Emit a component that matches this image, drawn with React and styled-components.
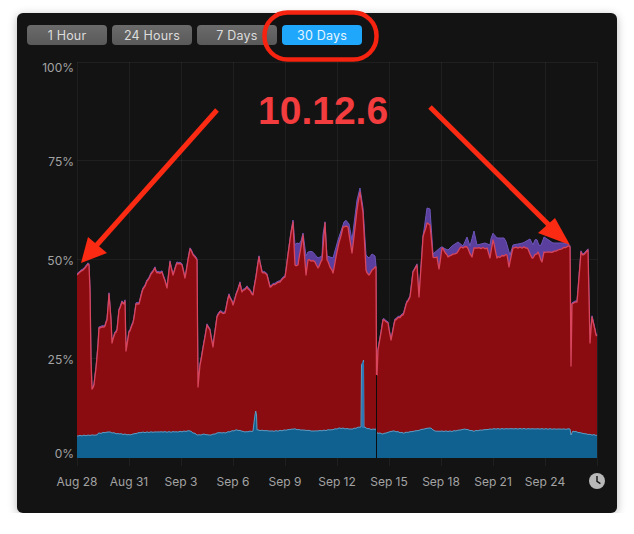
import React from 'react'
import styled, { createGlobalStyle } from 'styled-components'

const RANGES = ['1 Hour', '24 Hours', '7 Days', '30 Days']
const Y_TICKS = [['100%', 0], ['75%', 80], ['50%', 85], ['25%', 85], ['0%', 80]]
const X_TICKS = ['Aug 28', 'Aug 31', 'Sep 3', 'Sep 6', 'Sep 9', 'Sep 12', 'Sep 15', 'Sep 18', 'Sep 21', 'Sep 24']
const GRID_X = [77, 129, 181, 233, 285, 337, 389, 441, 493, 545, 597]
const GRID_Y = [62, 160, 259, 358]
const BASE = 458

// all points are in page pixels, read off the screenshot
const SYSTEM = [
  [77, 275], [80, 272], [84, 269], [88, 264], [89, 265], [90, 290], [91, 360], [92, 389], [94, 385], [96, 368], [98, 345], [99, 328],
  [103, 327], [105, 326], [107, 320], [109, 294], [111, 320], [112, 343], [115, 333], [117, 330], [119, 310], [121, 305], [122, 302],
  [124, 304], [125, 301], [126, 351], [129, 332], [133, 323], [136, 304], [139, 304], [142, 292], [148, 280], [155, 268], [157, 273],
  [162, 272], [167, 288], [170, 262], [173, 275], [177, 263], [182, 265], [185, 278], [190, 249], [195, 257], [197, 260], [198, 387],
  [200, 365], [207, 325], [210, 330], [213, 347], [217, 317], [220, 312], [225, 313], [229, 295], [233, 305], [240, 283], [242, 292],
  [247, 287], [253, 295], [259, 257], [262, 272], [267, 275], [270, 287], [280, 282], [285, 277], [290, 240], [293, 222], [295, 265],
  [298, 265], [303, 235], [306, 275], [308, 260], [315, 262], [318, 268], [322, 260], [325, 223], [327, 260], [333, 273], [338, 247],
  [343, 227], [348, 227], [352, 253], [357, 210], [360, 192], [363, 213], [366, 270], [369, 275], [375, 267], [376, 267], [376.5, 375], [377, 375],
  [378, 350], [383, 320], [388, 323], [391, 340], [395, 320], [403, 315], [407, 302], [410, 297], [413, 272], [417, 265], [419, 297],
  [423, 237], [427, 223], [430, 225], [433, 257], [437, 257], [439, 269], [442, 248], [448, 257], [457, 253], [460, 248], [467, 247],
  [472, 257], [474, 248], [487, 248], [490, 258], [493, 240], [497, 258], [507, 255], [509, 267], [513, 248], [527, 248], [532, 258],
  [538, 252], [542, 262], [544, 252], [553, 252], [568, 246], [570, 247], [571, 366], [572, 304], [577, 302], [581, 252], [583, 255],
  [588, 250], [590, 343], [592, 317], [596, 335], [597, 336],
]

// the purple only shows where it clears the red, 458 means no bump
const USER_BUMPS = [
  [77, 458], [284, 458], [291, 236], [293, 220], [295, 245], [297, 242], [300, 245], [303, 233], [306, 256], [308, 252], [312, 251],
  [318, 258], [322, 256], [324, 213], [327, 256], [333, 258], [338, 240], [345, 219], [349, 224], [352, 240], [357, 200], [360, 188],
  [363, 208], [366, 255], [369, 258], [372, 254], [375, 256], [376, 458], [421, 458], [424, 230], [427, 208], [430, 209], [433, 254],
  [441, 247], [448, 250], [452, 246], [458, 242], [463, 246], [467, 237], [470, 246], [474, 231], [477, 245], [485, 243], [490, 245],
  [492, 232], [497, 238], [505, 238], [510, 255], [513, 245], [523, 243], [530, 239], [533, 245], [536, 237], [540, 248], [544, 237],
  [553, 243], [565, 243], [569, 245], [570, 458], [597, 458],
]

const MEMORY = [
  [77, 436], [97, 435], [98, 433.5], [109, 432], [120, 434], [130, 435], [140, 432.7], [160, 432], [175, 432], [190, 431], [198, 435],
  [204, 434], [210, 435], [217, 433], [225, 433], [237, 430], [245, 432], [253, 431], [255, 415], [255.7, 411], [256.5, 415], [257, 430],
  [273, 431], [285, 430], [292, 429], [300, 430], [313, 431], [330, 430], [340, 428], [353, 429], [361, 427], [361.5, 365], [363.5, 360],
  [364, 427], [370, 429], [376, 429], [377, 433], [383, 434], [393, 431], [403, 433], [420, 430], [430, 428], [435, 431], [453, 431],
  [465, 429], [473, 431], [493, 429], [527, 429], [570, 429], [571, 435], [573, 431], [587, 434], [597, 435],
]

const noise = x => Math.sin(x * 1.7) * 0.6 + Math.sin(x * 3.1 + 1) * 0.4

const interp = (pts, x) => {
  const i = pts.findIndex(p => p[0] >= x)
  if (i <= 0) return pts[Math.max(i, 0)][1]
  const [x0, y0] = pts[i - 1]
  const [x1, y1] = pts[i]
  return y0 + ((y1 - y0) * (x - x0)) / (x1 - x0)
}

// fill long straight runs with a little jitter so the line reads as real samples
const sample = (pts, amp) => {
  const out = []
  pts.forEach((p, i) => {
    out.push(p)
    const q = pts[i + 1]
    if (!q) return
    for (let x = Math.ceil(p[0]) + 1; x < q[0]; x += 2) out.push([x, interp(pts, x) + noise(x) * amp])
  })
  return out
}

const systemLine = sample(SYSTEM, 1.1)
const memoryLine = sample(MEMORY, 0.6)
const userLine = systemLine.map(([x, y]) => [x, Math.min(y - 1.2, interp(USER_BUMPS, x))])

const toLine = pts => pts.map(([x, y], i) => `${i ? 'L' : 'M'}${x.toFixed(1)} ${y.toFixed(1)}`).join(' ')
const toArea = pts => `${toLine(pts)} L${pts[pts.length - 1][0]} ${BASE} L${pts[0][0]} ${BASE} Z`

const GlobalStyle = createGlobalStyle`
  html, body {
    margin: 0;
    background: #fff;
  }
  body {
    font-family: Inter, "Liberation Sans", sans-serif;
  }
`

const Panel = styled.div`
  position: relative;
  width: 600px;
  height: 500px;
  margin: 13px 0 0 17px;
  padding: 12px 0 0 10px;
  box-sizing: border-box;
  background: #131314;
  border-radius: 6px;
  box-shadow: 0 2px 10px rgba(0, 0, 0, 0.28);
`

const RangeBar = styled.div`
  display: flex;
  gap: 5px;
  margin-bottom: 15px;
`

const RangeButton = styled.div`
  width: 80px;
  height: 20px;
  border-radius: 4px;
  display: flex;
  align-items: center;
  justify-content: center;
  font-size: 12.5px;
  letter-spacing: 0.2px;
  color: ${p => (p.$active ? '#e6f5ff' : '#dcdcdc')};
  background: ${p => (p.$active ? '#1fa8fb' : 'linear-gradient(#6b6b6b, #595959)')};
`

const ChartRow = styled.div`
  display: flex;
  align-items: flex-start;
`

const YAxis = styled.div`
  width: 47px;
  flex: none;
  margin-right: 3px;
  padding-top: 1px;
  display: flex;
  flex-direction: column;
  align-items: flex-end;
`

const YLabel = styled.div`
  height: 14px;
  margin-top: ${p => p.$gap}px;
  line-height: 14px;
  font-size: 12px;
  color: #a3a3a3;
`

const Plot = styled.svg`
  display: block;
  flex: none;
  width: 522px;
  height: 406px;
  margin-top: 2px;
`

const XAxis = styled.div`
  display: flex;
  margin: 4px 0 0 24px;
`

const XCell = styled.div`
  width: 52px;
  height: 18px;
  flex: none;
  display: flex;
  align-items: center;
  justify-content: center;
  white-space: nowrap;
  font-size: 12px;
  color: #a3a3a3;
`

const Overlay = styled.svg`
  position: absolute;
  left: -17px;
  top: -13px;
  width: 634px;
  height: 534px;
  pointer-events: none;
`

const Version = styled.div`
  position: absolute;
  left: 241px;
  top: 76px;
  font-family: "Liberation Sans", Arial, sans-serif;
  font-weight: 700;
  font-size: 39px;
  line-height: 44px;
  color: #f23c3e;
`

function Chart() {
  return (
    <Plot viewBox="77 62 522 406">
      {GRID_Y.map(y => (
        <line key={y} x1="77" x2="597" y1={y + 0.5} y2={y + 0.5} stroke="#fff" strokeOpacity="0.05" />
      ))}
      {GRID_X.map(x => (
        <line key={x} x1={x + 0.5} x2={x + 0.5} y1="62" y2="466" stroke="#fff" strokeOpacity="0.05" />
      ))}
      <path d={toArea(userLine)} fill="#5a3f9e" />
      <path d={toLine(userLine)} fill="none" stroke="#6d55b8" strokeWidth="1" />
      <path d={toArea(systemLine)} fill="#8a0c10" />
      <path d={toLine(systemLine)} fill="none" stroke="#d8455c" strokeWidth="1.3" strokeLinejoin="round" />
      <path d={toArea(memoryLine)} fill="#10618f" />
      <path d={toLine(memoryLine)} fill="none" stroke="#5b9cc4" strokeWidth="1" />
      <path d="M362 362 L364 362 L364 428 L362 428 Z" fill="#2f76b4" />
      <line x1="376.5" x2="376.5" y1="375" y2="458" stroke="#0c0c0c" strokeWidth="1" />
    </Plot>
  )
}

function Clock() {
  return (
    <svg width="16" height="16" viewBox="0 0 16 16">
      <circle cx="8" cy="8" r="8" fill="#b8b8b8" />
      <path d="M8 3 V8.4 L11.4 10.6" fill="none" stroke="#131314" strokeWidth="1.4" />
    </svg>
  )
}

function Annotations() {
  return (
    <Overlay viewBox="0 0 634 534">
      <rect x="264.5" y="12.5" width="112" height="47" rx="23" fill="none" stroke="#f5230f" strokeWidth="4.5" />
      <g stroke="#fb2a12" strokeWidth="5">
        <line x1="217" y1="110" x2="95" y2="247" />
        <line x1="430" y1="107" x2="552" y2="228" />
      </g>
      <polygon points="81,263 88,237 107,253" fill="#fb2a12" />
      <polygon points="570,245 555,218 538,233" fill="#fb2a12" />
    </Overlay>
  )
}

export default function App() {
  return (
    <>
      <GlobalStyle />
      <Panel>
        <RangeBar>
          {RANGES.map(r => (
            <RangeButton key={r} $active={r === '30 Days'}>{r}</RangeButton>
          ))}
        </RangeBar>
        <ChartRow>
          <YAxis>
            {Y_TICKS.map(([label, gap]) => (
              <YLabel key={label} $gap={gap}>{label}</YLabel>
            ))}
          </YAxis>
          <Chart />
        </ChartRow>
        <XAxis>
          {X_TICKS.map(t => (
            <XCell key={t}>{t}</XCell>
          ))}
          <XCell><Clock /></XCell>
        </XAxis>
        <Version>10.12.6</Version>
        <Annotations />
      </Panel>
    </>
  )
}
